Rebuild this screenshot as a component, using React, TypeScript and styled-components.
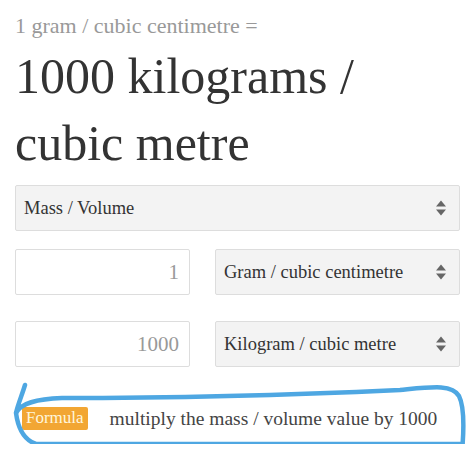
import React, { FC } from 'react';
import styled from 'styled-components';

const pageFont = "'Liberation Serif'";

const SortArrows: FC = () => (
  <svg width="12" height="18" viewBox="0 0 12 18">
    <path d="M6 1.5 L11 7.5 L1 7.5 Z" fill="#666666" />
    <path d="M1 10.5 L11 10.5 L6 16.5 Z" fill="#666666" />
  </svg>
);

type RowType = { top: number };
type PageType = { family: string };

const App: FC = () => {
  return (
    <Page family={pageFont}>
      <Subtitle>1 gram / cubic centimetre =</Subtitle>
      <Result>
        1000 kilograms /
        <br />
        cubic metre
      </Result>
      <Select top={8}>
        <span>Mass / Volume</span>
        <SortArrows />
      </Select>
      <ConvertRow top={18}>
        <NumberInput readOnly value="1" />
        <Select top={0}>
          <span>Gram / cubic centimetre</span>
          <SortArrows />
        </Select>
      </ConvertRow>
      <ConvertRow top={26}>
        <NumberInput readOnly value="1000" />
        <Select top={0}>
          <span>Kilogram / cubic metre</span>
          <SortArrows />
        </Select>
      </ConvertRow>
      <FormulaRow>
        <Badge>Formula</Badge>
        <FormulaText>multiply the mass / volume value by 1000</FormulaText>
      </FormulaRow>
      <Scribble viewBox="0 0 474 452" width="474" height="452">
        <path
          d="M25 385 C 22 395, 18 404, 16 413 C 21 403, 36 399, 62 398 C 150 398, 290 395, 400 390 C 432 387, 452 384, 459 396 C 466 410, 463 440, 462 452"
          fill="none"
          stroke="#4ea7e2"
          strokeWidth="4.5"
          strokeLinecap="round"
        />
        <path
          d="M16 413 C 18 428, 24 440, 36 444 L 462 444"
          fill="none"
          stroke="#4ea7e2"
          strokeWidth="4.5"
          strokeLinecap="round"
        />
      </Scribble>
    </Page>
  );
};

const Page = styled.div<PageType>`
  position: relative;
  width: 474px;
  height: 452px;
  margin: -8px;
  overflow: hidden;
  padding: 12px 14px 0 15px;
  box-sizing: border-box;
  background: #ffffff;
  font-family: ${({ family }) => family};
`;

const Subtitle = styled.div`
  font-size: 22px;
  line-height: 28px;
  color: #999999;
`;

const Result = styled.h1`
  margin: 3px 0 0;
  font-family: inherit;
  font-size: 50px;
  font-weight: 400;
  line-height: 67px;
  color: #333333;
`;

const Select = styled.div<RowType>`
  display: flex;
  align-items: center;
  justify-content: space-between;
  height: 46px;
  margin-top: ${({ top }) => top}px;
  padding: 0 12px 0 8px;
  box-sizing: border-box;
  background-color: #f3f3f3;
  border: 1px solid #dddddd;
  border-radius: 2px;
  font-size: 18.5px;
  color: #333333;
`;

const ConvertRow = styled.div<RowType>`
  display: grid;
  grid-template-columns: 175px 1fr;
  column-gap: 25px;
  margin-top: ${({ top }) => top}px;
`;

const NumberInput = styled.input`
  height: 46px;
  width: 100%;
  padding: 0 10px;
  box-sizing: border-box;
  border: 1px solid #dddddd;
  border-radius: 2px;
  background: #ffffff;
  font-family: inherit;
  font-size: 21px;
  color: #999999;
  text-align: right;
  outline: none;
`;

const FormulaRow = styled.div`
  display: flex;
  align-items: center;
  margin-top: 40px;
  padding-left: 7px;
`;

const Badge = styled.span`
  display: inline-block;
  padding: 1px 4px 2px;
  background-color: #f2a633;
  border-radius: 2px;
  font-size: 17px;
  line-height: 20px;
  color: #fff6dc;
`;

const FormulaText = styled.span`
  margin-left: 22px;
  font-size: 19.5px;
  color: #444444;
`;

const Scribble = styled.svg`
  position: absolute;
  left: 0;
  top: 0;
  pointer-events: none;
`;

export default App;
